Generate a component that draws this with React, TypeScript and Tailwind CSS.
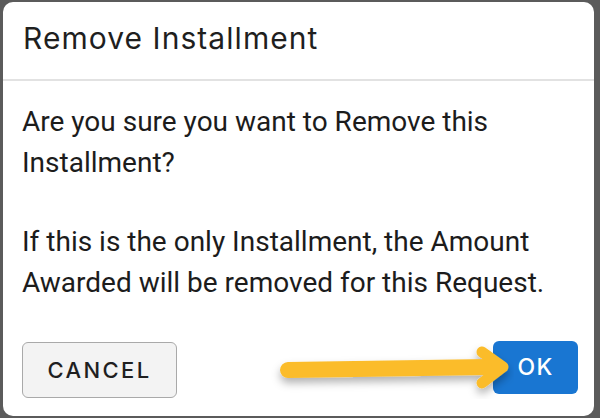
import React from 'react';

function Arrow() {
  return (
    <svg
      className="absolute left-[270px] top-[343px] pointer-events-none"
      width="244"
      height="56"
      viewBox="0 0 244 56"
    >
      <defs>
        <filter id="arrowShadow" x="-10%" y="-40%" width="120%" height="200%">
          <feDropShadow dx="0" dy="5" stdDeviation="4" floodColor="#000" floodOpacity="0.3" />
        </filter>
      </defs>
      <g filter="url(#arrowShadow)">
        <line x1="18" y1="27" x2="218" y2="24" stroke="#fbbc2b" strokeWidth="16" strokeLinecap="round" />
        <path d="M212 9 L233 24 L212 40" fill="none" stroke="#fbbc2b" strokeWidth="11" strokeLinecap="round" strokeLinejoin="round" />
      </g>
    </svg>
  );
}

export default function App() {
  return (
    <div className="w-[600px] h-[418px] bg-[#5b5b5b] pt-[2px] pl-[3px] pr-[6px] pb-[2px] relative overflow-hidden">
      <div className="h-full bg-white rounded-[10px] flex flex-col">
        <div className="h-[79px] flex items-center pb-[6px] px-[20px] border-b-2 border-[#e2e2e2]">
          <h1 className="text-[30px] tracking-[0.035em] text-[#1f1f1f] font-['Inter',sans-serif] font-normal leading-none">
            Remove Installment
          </h1>
        </div>

        <div className="px-[19px] pt-[20px] text-[28px] leading-[41px] text-[#1c1c1c] font-['Roboto',sans-serif]">
          <p>Are you sure you want to Remove this Installment?</p>
          <p className="mt-[38px]">
            If this is the only Installment, the Amount Awarded will be removed for this Request.
          </p>
        </div>

        <div className="mt-auto flex items-start justify-between pl-[19px] pr-[16px] pb-[18px]">
          <button className="mt-[1px] w-[155px] h-[56px] bg-[#f3f3f3] border-[1.5px] border-[#a9a9a9] rounded-[6px] text-[22px] tracking-[0.11em] text-[#1f1f1f] font-['Inter',sans-serif] font-medium">
            CANCEL
          </button>
          <button className="w-[85px] h-[53px] bg-[#1976d2] rounded-[6px] text-[23px] tracking-[0.06em] text-white font-['Inter',sans-serif] font-medium">
            OK
          </button>
        </div>
      </div>
      <Arrow />
    </div>
  );
}
